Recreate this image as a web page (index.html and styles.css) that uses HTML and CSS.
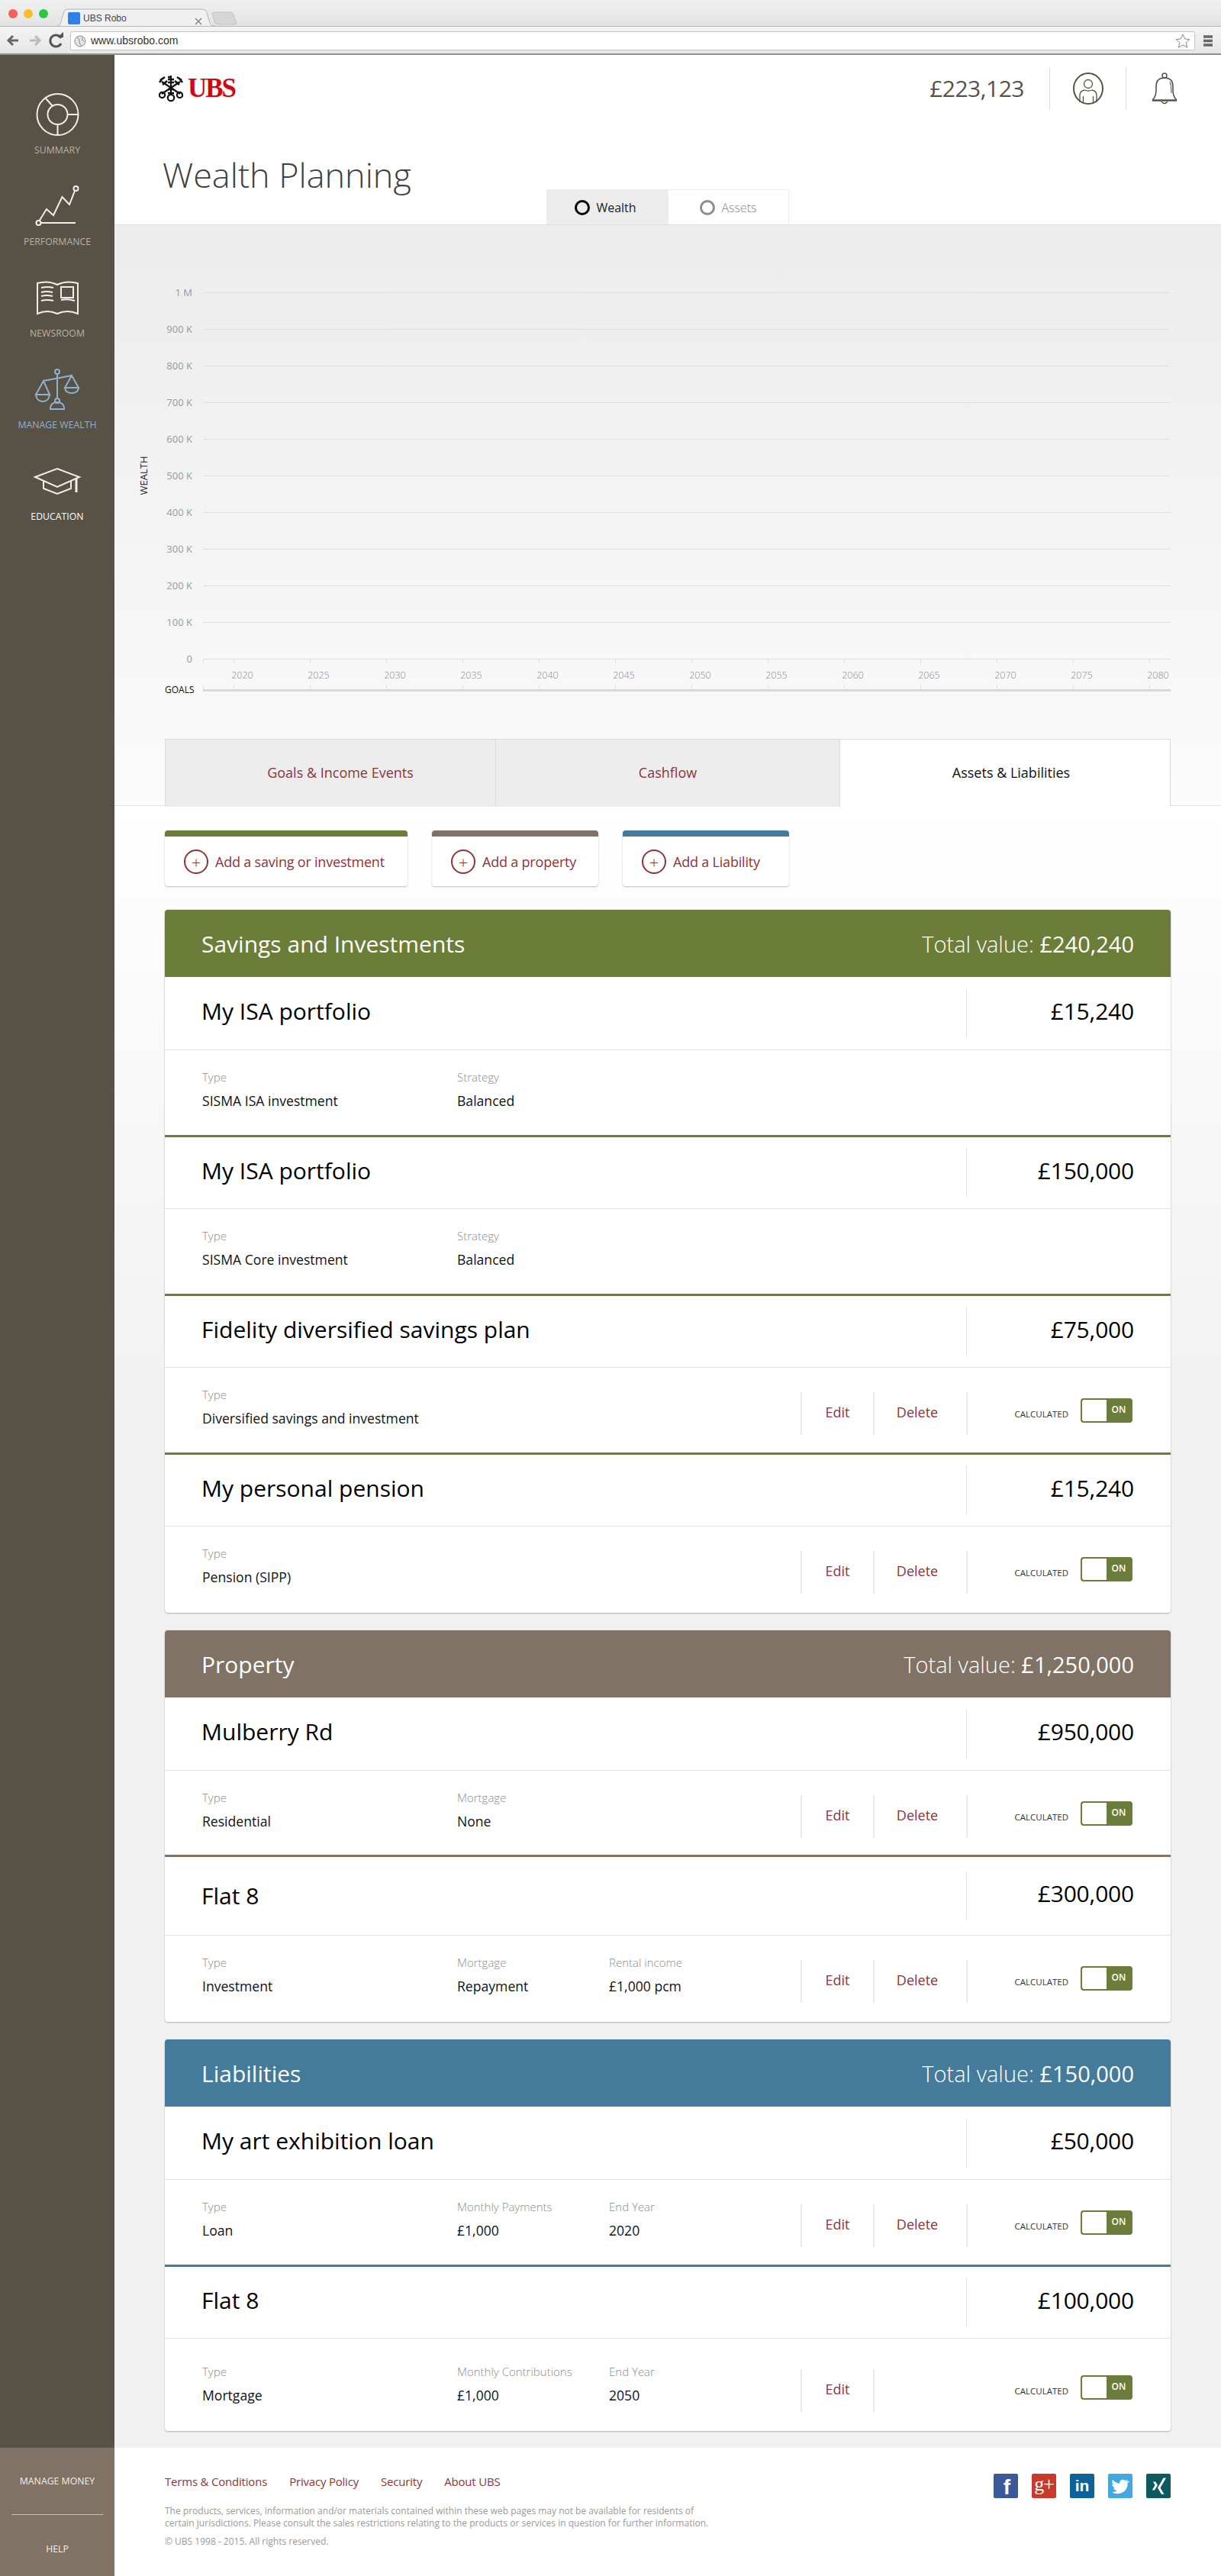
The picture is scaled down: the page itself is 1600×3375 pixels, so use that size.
FILE: index.html
```html
<!DOCTYPE html>
<html lang="en">
<head>
<meta charset="utf-8">
<title>UBS Robo</title>
<link rel="stylesheet" href="styles.css">
</head>
<body>
<header class="browser">
  <svg class="browser-art" viewBox="0 0 1600 72" width="1600" height="72" aria-hidden="true">
    <circle cx="17" cy="18" r="6" fill="#f4615a"/><circle cx="37" cy="18" r="6" fill="#fbbe2e"/><circle cx="57" cy="18" r="6" fill="#2ac83f"/>
    <path d="M74 34 C80 34 79 30 81 24 L84 15 Q85 12 89 12 L265 12 Q270 12 271 16 L275 30 Q276 34 282 34" fill="#f0f0f0" stroke="#b5b5b5"/>
    <path d="M278 17 Q278 16 280 16 L302 16 Q305 16 306 19 L310 30 Q310 32 307 32 L286 32 Q282 32 281 29 Z" fill="#d6d6d6" stroke="#c4c4c4"/>
    <rect x="89" y="16" width="16" height="16" rx="2" fill="#2f7fe6"/>
    <path d="M256 32 l8 -8 M256 24 l8 8" stroke="#888" stroke-width="1.6"/>
    <path d="M24 53 H11 M17 47 l-6 6 6 6" fill="none" stroke="#666" stroke-width="3"/>
    <path d="M39 53 H52 M46 47 l6 6 -6 6" fill="none" stroke="#bbb" stroke-width="3"/>
    <path d="M80 50 A7.5 7.5 0 1 0 80 57" fill="none" stroke="#555" stroke-width="3"/><path d="M75 49 h8 v-7 z" fill="#555"/>
    <rect x="92.500" y="41.500" width="1473" height="24" rx="2" fill="#fff" stroke="#c6c6c6"/>
    <circle cx="105" cy="54" r="7" fill="#e4e4e4" stroke="#888"/><path d="M101 49 q4 2 3 5 t3 6 M108 49 q-2 3 2 5" fill="none" stroke="#888"/>
    <path d="M1550 45 l2.700 6 6.300 .6 -4.800 4.300 1.500 6.300 -5.700 -3.300 -5.700 3.300 1.500 -6.300 -4.800 -4.300 6.300 -.6 z" fill="#fff" stroke="#888"/>
    <path d="M1577 48 h12 M1577 53.500 h12 M1577 59 h12" stroke="#666" stroke-width="3.500"/>
  </svg>
  <span class="browser-tab">UBS Robo</span>
  <span class="browser-url">www.ubsrobo.com</span>
</header>
<div class="app">
  <aside class="sidebar">
    <nav class="nav">
      <a class="nav-item">
        <svg class="nav-icon" viewBox="0 112 150 76" aria-hidden="true"><circle cx="75.500" cy="150" r="27"/><circle cx="75.500" cy="150" r="13"/><path d="M60 129 L69 139 M88.500 150 H102.500 M75.500 163 V177"/></svg>
        <span>SUMMARY</span>
      </a>
      <a class="nav-item">
        <svg class="nav-icon" viewBox="0 232 150 76" aria-hidden="true"><path d="M51 290 L61 274 L70 282 L81.500 258 L91 268 L98 250 M53 292 H99"/><circle cx="50.500" cy="292" r="3"/><circle cx="99.500" cy="247" r="3"/></svg>
        <span>PERFORMANCE</span>
      </a>
      <a class="nav-item">
        <svg class="nav-icon" viewBox="0 352 150 76" aria-hidden="true"><path d="M49 371 Q63 367 75 373 Q87 367 102 371 V411 Q88 405 75 411 Q62 405 49 411 Z M54 377 Q62 375 70 377 M54 383 Q61 381 69 383 M54 388 Q61 386 69 388 M54 394 Q62 392 70 394 M80 376 H96 V390 H80 Z M80 393 Q89 391 98 394"/></svg>
        <span>NEWSROOM</span>
      </a>
      <a class="nav-item nav-item-active">
        <svg class="nav-icon" viewBox="0 472 150 76" aria-hidden="true"><circle cx="75" cy="487" r="3"/><circle cx="75" cy="525" r="3"/><path d="M75 490 V522 M57 499 L94 492 M57 499 L47 517 H65 Z M47 517 Q48 526 56 526 Q64 526 65 517 M94 492 L85 508 H103 Z M85 508 Q86 515 94 515 Q102 515 103 508 M66 536 H84 Q84 527 75 527 Q66 527 66 536 Z"/></svg>
        <span>MANAGE WEALTH</span>
      </a>
      <a class="nav-item nav-item-current">
        <svg class="nav-icon" viewBox="0 592 150 76" aria-hidden="true"><path d="M46 625 L75 614 L104 625 L75 638 Z M57 630 V640 L75 647 L93 640 V630"/><path class="nav-tassel" d="M100 627 V645"/></svg>
        <span>EDUCATION</span>
      </a>
    </nav>
    <div class="side-bottom">
      <a class="side-link side-link-first">MANAGE MONEY</a>
      <a class="side-link">HELP</a>
    </div>
  </aside>

  <div class="main">
    <section class="top">
      <div class="topbar">
        <div class="logo">
          <svg class="logo-keys" viewBox="0 0 32 36" width="32" height="36" aria-hidden="true">
            <g stroke="#111" fill="none" stroke-width="2.200">
              <path d="M16 1 V27 M4 9 L28 25 M28 9 L4 25"/>
              <circle cx="16" cy="30" r="4.200"/><circle cx="4.500" cy="26.500" r="3.600"/><circle cx="27.500" cy="26.500" r="3.600"/>
              <path d="M12 6 H20 M12 3 H16 M12 10 H20 M2 7 L8 3 M5 13 L11 8 M1 10 L4 6 M30 7 L24 3 M27 13 L21 8 M31 10 L28 6 M12 24 L20 24 M12 19 H20" stroke-width="2.600"/>
            </g>
          </svg>
          <span class="logo-text">UBS</span>
        </div>
        <div class="account">
          <span class="balance">£223,123</span>
          <span class="account-cell">
            <svg viewBox="0 0 42 44" width="42" height="44" aria-hidden="true"><g fill="none" stroke="#585146"><ellipse cx="21" cy="22" rx="19" ry="20" stroke-width="2"/><circle cx="21" cy="16" r="5.500" stroke-width="1.300"/><path d="M10 40 V31 Q10 25 16 24 Q21 26 26 24 Q32 25 32 31 V40 M14.500 41 V32 M27.500 41 V32" stroke-width="1.300"/></g></svg>
          </span>
          <span class="account-cell">
            <svg viewBox="0 0 36 44" width="36" height="44" aria-hidden="true"><g fill="none" stroke="#585146"><circle cx="18" cy="5" r="3" stroke-width="1.500"/><path d="M2 37 Q7 33 7 24 V19 Q7 8 18 8 Q29 8 29 19 V24 Q29 33 34 37" stroke-width="1.600"/><path d="M2 37.500 H34" stroke-width="2.500"/><path d="M14 39 Q18 44 22 39" stroke-width="1.300"/><path d="M25 13 Q27 18 27 28" stroke-width="1"/></g></svg>
          </span>
        </div>
      </div>
      <div class="title-row">
        <h1 class="page-title">Wealth Planning</h1>
        <div class="view-tabs">
          <a class="view-tab view-tab-on"><i class="ring"></i>Wealth</a>
          <a class="view-tab"><i class="ring"></i>Assets</a>
        </div>
      </div>
    </section>

    <section class="chart-area">
      <svg class="chart" viewBox="150 295 1450 673" width="1450" height="673" role="img" aria-label="Wealth chart">
        <g class="grid">
          <path d="M266 383.500 H1534 M266 431.500 H1534 M266 479.500 H1534 M266 527.500 H1534 M266 575.500 H1534 M266 623.500 H1534 M266 671.500 H1534 M266 719.500 H1534 M266 767.500 H1534 M266 815.500 H1534"/>
          <path class="axis" d="M266 863.500 H1534 M266.500 863 V869 M306.500 863 V869 M406.500 863 V869 M506.500 863 V869 M606.500 863 V869 M706.500 863 V869 M806.500 863 V869 M906.500 863 V869 M1006.500 863 V869 M1106.500 863 V869 M1206.500 863 V869 M1306.500 863 V869 M1406.500 863 V869 M1506.500 863 V869"/>
          <path class="axis" d="M266.500 898 V904 M306.500 898 V904 M406.500 898 V904 M506.500 898 V904 M606.500 898 V904 M706.500 898 V904 M806.500 898 V904 M906.500 898 V904 M1006.500 898 V904 M1106.500 898 V904 M1206.500 898 V904 M1306.500 898 V904 M1406.500 898 V904 M1506.500 898 V904"/>
          <path class="goal-line" d="M266 904.500 H1534"/>
        </g>
        <g class="y-labels">
          <text x="252" y="388">1 M</text><text x="252" y="436">900 K</text><text x="252" y="484">800 K</text><text x="252" y="532">700 K</text><text x="252" y="580">600 K</text><text x="252" y="628">500 K</text><text x="252" y="676">400 K</text><text x="252" y="724">300 K</text><text x="252" y="772">200 K</text><text x="252" y="820">100 K</text><text x="252" y="868">0</text>
        </g>
        <g class="x-labels">
          <text x="317.500" y="889">2020</text><text x="417.500" y="889">2025</text><text x="517.500" y="889">2030</text><text x="617.500" y="889">2035</text><text x="717.500" y="889">2040</text><text x="817.500" y="889">2045</text><text x="917.500" y="889">2050</text><text x="1017.500" y="889">2055</text><text x="1117.500" y="889">2060</text><text x="1217.500" y="889">2065</text><text x="1317.500" y="889">2070</text><text x="1417.500" y="889">2075</text><text x="1517.500" y="889">2080</text>
        </g>
        <text class="axis-name" transform="translate(193 623) rotate(-90)">WEALTH</text>
        <text class="goals-name" x="216" y="908">GOALS</text>
      </svg>
      <div class="section-tabs">
        <a class="section-tab section-tab-goals">Goals &amp; Income Events</a>
        <a class="section-tab section-tab-cash">Cashflow</a>
        <a class="section-tab section-tab-on">Assets &amp; Liabilities</a>
      </div>
    </section>

    <section class="portfolio">
      <div class="add-row">
        <a class="add-btn add-green add-wide"><i class="plus">+</i>Add a saving or investment</a>
        <a class="add-btn add-brown"><i class="plus">+</i>Add a property</a>
        <a class="add-btn add-blue"><i class="plus">+</i>Add a Liability</a>
      </div>

      <article class="card card-green">
        <header class="card-head"><h2>Savings and Investments</h2><p><span>Total value:</span> £240,240</p></header>
        <div class="item">
          <div class="item-top item-top-first"><h3>My ISA portfolio</h3><b>£15,240</b></div>
          <div class="item-detail">
            <dl class="field"><dt>Type</dt><dd>SISMA ISA investment</dd></dl>
            <dl class="field field-b"><dt>Strategy</dt><dd>Balanced</dd></dl>
          </div>
        </div>
        <div class="item">
          <div class="item-top"><h3>My ISA portfolio</h3><b>£150,000</b></div>
          <div class="item-detail">
            <dl class="field"><dt>Type</dt><dd>SISMA Core investment</dd></dl>
            <dl class="field field-b"><dt>Strategy</dt><dd>Balanced</dd></dl>
          </div>
        </div>
        <div class="item">
          <div class="item-top"><h3>Fidelity diversified savings plan</h3><b>£75,000</b></div>
          <div class="item-detail">
            <dl class="field"><dt>Type</dt><dd>Diversified savings and investment</dd></dl>
            <div class="actions"><a class="act act-edit">Edit</a><a class="act act-del">Delete</a><div class="calc"><span>CALCULATED</span><span class="toggle"><i></i><em>ON</em></span></div></div>
          </div>
        </div>
        <div class="item">
          <div class="item-top"><h3>My personal pension</h3><b>£15,240</b></div>
          <div class="item-detail">
            <dl class="field"><dt>Type</dt><dd>Pension (SIPP)</dd></dl>
            <div class="actions"><a class="act act-edit">Edit</a><a class="act act-del">Delete</a><div class="calc"><span>CALCULATED</span><span class="toggle"><i></i><em>ON</em></span></div></div>
          </div>
        </div>
      </article>

      <article class="card card-brown">
        <header class="card-head"><h2>Property</h2><p><span>Total value:</span> £1,250,000</p></header>
        <div class="item">
          <div class="item-top item-top-first"><h3>Mulberry Rd</h3><b>£950,000</b></div>
          <div class="item-detail">
            <dl class="field"><dt>Type</dt><dd>Residential</dd></dl>
            <dl class="field field-b"><dt>Mortgage</dt><dd>None</dd></dl>
            <div class="actions"><a class="act act-edit">Edit</a><a class="act act-del">Delete</a><div class="calc"><span>CALCULATED</span><span class="toggle"><i></i><em>ON</em></span></div></div>
          </div>
        </div>
        <div class="item">
          <div class="item-top item-top-tall"><h3>Flat 8</h3><b>£300,000</b></div>
          <div class="item-detail">
            <dl class="field"><dt>Type</dt><dd>Investment</dd></dl>
            <dl class="field field-b"><dt>Mortgage</dt><dd>Repayment</dd></dl>
            <dl class="field field-c"><dt>Rental income</dt><dd>£1,000 pcm</dd></dl>
            <div class="actions"><a class="act act-edit">Edit</a><a class="act act-del">Delete</a><div class="calc"><span>CALCULATED</span><span class="toggle"><i></i><em>ON</em></span></div></div>
          </div>
        </div>
      </article>

      <article class="card card-blue">
        <header class="card-head"><h2>Liabilities</h2><p><span>Total value:</span> £150,000</p></header>
        <div class="item">
          <div class="item-top item-top-first"><h3>My art exhibition loan</h3><b>£50,000</b></div>
          <div class="item-detail">
            <dl class="field"><dt>Type</dt><dd>Loan</dd></dl>
            <dl class="field field-b"><dt>Monthly Payments</dt><dd>£1,000</dd></dl>
            <dl class="field field-c"><dt>End Year</dt><dd>2020</dd></dl>
            <div class="actions"><a class="act act-edit">Edit</a><a class="act act-del">Delete</a><div class="calc"><span>CALCULATED</span><span class="toggle"><i></i><em>ON</em></span></div></div>
          </div>
        </div>
        <div class="item item-roomy">
          <div class="item-top"><h3>Flat 8</h3><b>£100,000</b></div>
          <div class="item-detail">
            <dl class="field"><dt>Type</dt><dd>Mortgage</dd></dl>
            <dl class="field field-b"><dt>Monthly Contributions</dt><dd>£1,000</dd></dl>
            <dl class="field field-c"><dt>End Year</dt><dd>2050</dd></dl>
            <div class="actions"><a class="act act-edit">Edit</a><a class="act act-del"></a><div class="calc calc-open"><span>CALCULATED</span><span class="toggle"><i></i><em>ON</em></span></div></div>
          </div>
        </div>
      </article>
    </section>

    <footer class="footer">
      <div class="footer-text">
        <nav class="footer-links"><a>Terms &amp; Conditions</a><a>Privacy Policy</a><a>Security</a><a>About UBS</a></nav>
        <p class="legal">The products, services, information and/or materials contained within these web pages may not be available for residents of certain jurisdictions. Please consult the sales restrictions relating to the products or services in question for further information.</p>
        <p class="copyright">© UBS 1998 - 2015. All rights reserved.</p>
      </div>
      <div class="social">
        <a class="soc soc-f">f</a>
        <a class="soc soc-g">g+</a>
        <a class="soc soc-in">in</a>
        <a class="soc soc-t"><svg viewBox="0 0 32 32" width="32" height="32" aria-hidden="true"><path fill="#fff" d="M26.500 9.500 Q24.800 10.300 23.500 10.400 Q25 9.400 25.500 7.800 Q23.900 8.700 22.400 9 C19.500 6.200 14.500 8.500 15.400 12.700 C11.500 12.500 8.200 10.500 6 7.900 C4.700 10.200 5.500 13 7.500 14.400 Q6.300 14.400 5.300 13.800 C5.400 16.200 7 18.100 9.300 18.600 Q8.200 18.900 7.100 18.700 C7.800 20.700 9.500 22 11.700 22.100 C9.600 23.700 7.300 24.400 4.700 24.100 C14.500 30 26.200 23.500 25.600 12.200 Q27.200 11 28 9.500 Q27 9.800 26.500 9.500 Z"/></svg></a>
        <a class="soc soc-x"><svg viewBox="0 0 32 32" width="32" height="32" aria-hidden="true"><path fill="#fff" d="M22.500 5.500 H26 L18.500 18.500 L23.500 27 H20 L15 18.500 Z M9 10.500 H12.200 L15 15 L11 21.500 H7.800 L11.500 15 Z"/></svg></a>
      </div>
    </footer>
  </div>
</div>
</body>
</html>
```
FILE: styles.css
```css
* { box-sizing: border-box; }
html, body { margin: 0; padding: 0; }
body { width: 1600px; background: #fff; font-family: "Open Sans", "Noto Sans", "Liberation Sans", sans-serif; color: #000; overflow-x: hidden; }
a { color: inherit; text-decoration: none; }
h1, h2, h3, p, dl, dd { margin: 0; font-weight: 400; }
i, em { font-style: normal; }

/* browser chrome */
.browser { position: relative; height: 72px; border-bottom: 2px solid #8f8f8f; background: linear-gradient(#f0f0f0 0, #e4e4e4 34px, #b5b5b5 34px, #b5b5b5 35px, #f4f4f4 35px, #e6e6e6 100%); }
.browser-art { display: block; }
.browser-tab { position: absolute; left: 109px; top: 15px; font-size: 12px; line-height: 18px; color: #444; font-family: "Liberation Sans", sans-serif; }
.browser-url { position: absolute; left: 119px; top: 43px; font-size: 14px; line-height: 20px; color: #333; font-family: "Liberation Sans", sans-serif; }

/* layout */
.app { display: flex; align-items: stretch; }
.sidebar { width: 150px; flex: none; display: flex; flex-direction: column; justify-content: space-between; background: #585146; }
.main { width: 1450px; flex: none; }

/* sidebar */
.nav { padding-top: 40px; display: flex; flex-direction: column; gap: 27px; }
.nav-item { display: block; text-align: center; font-size: 12.300px; line-height: 16px; color: #b8b1a6; }
.nav-item span { display: block; margin-top: 1px; }
.nav-icon { display: block; width: 150px; height: 76px; fill: none; stroke: #f0eeea; stroke-width: 2; }
.nav-tassel { stroke-width: 3; }
.nav-item-active { color: #8fb1cd; }
.nav-item-active .nav-icon { stroke: #8fb1cd; }
.nav-item-current { color: #fff; }
.side-bottom { height: 168px; background: #807265; display: flex; flex-direction: column; align-items: center; color: #f1efec; font-size: 12.300px; }
.side-link { height: 80px; width: 120px; display: flex; align-items: center; justify-content: center; padding-top: 8px; }
.side-link-first { height: 88px; padding-top: 0; border-bottom: 1px solid #c9c2ba; }

/* top header */
.top { height: 223px; display: flex; flex-direction: column; border-bottom: 1px solid #e0e0e0; }
.topbar { height: 72px; margin-top: 16px; display: flex; justify-content: space-between; padding-left: 58px; padding-right: 25px; }
.logo { display: flex; align-items: flex-start; gap: 4px; padding-top: 10px; }
.logo-keys { flex: none; }
.logo-text { font-family: "Liberation Serif", serif; font-weight: 700; font-size: 35px; line-height: 36px; letter-spacing: -2px; color: #d40511; margin-left: 2px; }
.account { display: flex; align-items: flex-start; }
.balance { font-size: 30px; line-height: 56px; color: #585146; margin-right: 33px; letter-spacing: -.5px; }
.account-cell { width: 100px; height: 56px; border-left: 1px solid #dcdcdc; display: flex; align-items: center; justify-content: center; }
.title-row { flex: 1; display: flex; align-items: flex-end; padding-left: 63px; }
.page-title { width: 503px; font-size: 45px; font-weight: 300; line-height: 60px; color: #3f3f3f; margin-bottom: 35px; flex: none; }
.view-tabs { display: flex; }
.view-tab { height: 46px; width: 159px; display: flex; align-items: center; justify-content: center; gap: 8px; font-size: 16px; font-weight: 300; color: #8a8a8a; border: 1px solid #eeeeee; border-bottom: 0; background: #fff; }
.view-tab-on { background: #ececec; color: #222; border-color: #ececec; font-weight: 400; padding-right: 4px; }
.ring { width: 20px; height: 20px; border: 3px solid #8c8c8c; border-radius: 50%; }
.view-tab-on .ring { border-color: #000; }

/* chart */
.chart-area { height: 761px; background: linear-gradient(#ececec, #fbfbfb); border-bottom: 1px solid #e2e2e2; }
.chart { display: block; font-family: "Open Sans", "Noto Sans", sans-serif; }
.grid path { fill: none; stroke: #e0e0e0; stroke-width: 1; }
.grid .goal-line { stroke-width: 3; stroke: #d9d9d9; }
.y-labels text { text-anchor: end; font-size: 13px; fill: #9a9a9a; }
.x-labels text { text-anchor: middle; font-size: 12.500px; font-weight: 300; fill: #8a8a8a; }
.axis-name { text-anchor: middle; font-size: 13px; fill: #222; }
.goals-name { font-size: 12px; fill: #111; }
.section-tabs { display: grid; grid-template-columns: 433px 451px 434px; margin: 0 66px; height: 88px; }
.section-tab { display: flex; align-items: center; justify-content: center; font-size: 18px; padding-bottom: 3px; color: #8f3338; background: #ededed; border: 1px solid #dcdcdc; border-bottom: 0; border-right: 0; }
.section-tab-goals { padding-left: 26px; }
.section-tab-on { background: #fff; color: #111; border-right: 1px solid #dcdcdc; padding-left: 16px; height: 89px; position: relative; }

/* portfolio */
.portfolio { padding: 32px 66px 22px; background: linear-gradient(#fff 0, #f1f1f1 800px); display: flex; flex-direction: column; }
.add-row { display: flex; gap: 32px; margin-bottom: 31px; }
.add-btn { height: 73px; width: 218px; display: flex; align-items: center; gap: 9px; padding: 0 0 0 25px; background: #fff; border-radius: 4px; border-top: 8px solid #6b7d39; box-shadow: 0 1px 2px rgba(0,0,0,.25); font-size: 18px; letter-spacing: -.2px; color: #8f3338; }
.add-wide { width: 318px; }
.add-brown { border-top-color: #807265; }
.add-blue { border-top-color: #457b9a; }
.plus { width: 32px; height: 32px; border: 2px solid #8f3338; border-radius: 50%; display: flex; align-items: center; justify-content: center; font-size: 22px; font-weight: 300; line-height: 1; letter-spacing: 0; flex: none; }

.card { background: #fff; border-radius: 4px; box-shadow: 0 1px 2px rgba(0,0,0,.25), 0 0 0 1px #ececec; margin-bottom: 23px; }
.card:last-child { margin-bottom: 0; }
.card-head { height: 88px; display: flex; align-items: center; justify-content: space-between; padding: 0 48px; border-radius: 4px 4px 0 0; color: #fff; }
.card-head h2 { font-size: 30px; font-weight: 400; }
.card-head p { font-size: 29px; }
.card-head p span { font-weight: 300; }
.card-green .card-head { background: #6b7d39; }
.card-brown .card-head { background: #807265; }
.card-blue .card-head { background: #457b9a; }

.item-top { height: 94px; display: flex; align-items: center; justify-content: space-between; padding-left: 48px; border-bottom: 1px solid #e3e3e3; }
.item-top-first { height: 96px; }
.item-top-tall { height: 103px; }
.item-top h3 { font-size: 30px; font-weight: 400; line-height: 40px; margin-bottom: 6px; }
.item-top-tall h3 { margin-bottom: 0; }
.item-top b { width: 268px; height: 64px; border-left: 1px solid #e3e3e3; padding-right: 48px; font-size: 30px; font-weight: 400; line-height: 58px; text-align: right; letter-spacing: -.2px; }
.item-detail { height: 114px; display: flex; align-items: flex-start; padding: 25px 0 0 49px; border-bottom: 3px solid #6b7d39; }
.card-brown .item-detail { border-bottom-color: #807265; height: 113px; }
.card-blue .item-detail { border-bottom-color: #457b9a; }
.item:last-child .item-detail { border-bottom: 0; height: 113px; }
.item.item-roomy .item-detail { height: 121px; padding-top: 33px; }
.field { width: 334px; flex: none; }
.field-b { width: 199px; }
.field-c { width: 160px; }
.field dt { font-size: 15px; line-height: 20px; font-weight: 300; color: #8c8c8c; }
.field dd { font-size: 17.600px; line-height: 20px; margin-top: 11px; color: #111; }
.actions { margin-left: auto; margin-top: 7px; height: 56px; display: flex; }
.act { height: 56px; display: flex; align-items: center; justify-content: center; border-left: 2px solid #e9e9e9; font-size: 18px; color: #8f3338; padding-bottom: 4px; }
.act-edit { width: 95px; }
.act-del { width: 122px; padding-right: 8px; }
.calc { width: 268px; height: 56px; border-left: 2px solid #e9e9e9; display: flex; align-items: center; justify-content: flex-end; gap: 16px; padding-right: 50px; font-size: 11.500px; color: #333; }
.calc-open { border-left-color: transparent; }
.toggle { width: 68px; height: 32px; margin-bottom: 8px; border: 2px solid #6b7d39; border-radius: 4px; background: #6b7d39; display: flex; overflow: hidden; }
.toggle i { width: 32px; background: #fff; border-radius: 2px 0 0 2px; }
.toggle em { flex: 1; text-align: center; color: #fff; font-size: 12px; font-weight: 600; line-height: 26px; }

/* footer */
.footer { height: 168px; display: flex; justify-content: space-between; padding: 34px 66px 0; }
.footer-text { width: 716px; }
.footer-links { display: flex; gap: 29px; font-size: 15px; line-height: 20px; color: #8f3338; letter-spacing: -.2px; }
.legal { margin-top: 21px; font-size: 12px; line-height: 16px; color: #9a9a9a; font-weight: 400; }
.copyright { margin-top: 8px; font-size: 12px; line-height: 16px; color: #9a9a9a; }
.social { display: flex; gap: 18px; }
.soc { width: 32px; height: 32px; border-radius: 2px; display: flex; align-items: center; justify-content: center; color: #fff; font-family: "Liberation Sans", sans-serif; font-weight: 700; }
.soc-f { background: #3b5998; font-size: 28px; line-height: 28px; padding: 4px 0 0 3px; }
.soc-g { background: #c93a2b; font-family: "Liberation Serif", serif; font-size: 26px; font-weight: 400; letter-spacing: -1px; line-height: 28px; padding-bottom: 4px; }
.soc-in { background: #0f6199; font-size: 21px; line-height: 28px; }
.soc-t { background: #44a8e0; }
.soc-x { background: #0b5a5f; }
```
